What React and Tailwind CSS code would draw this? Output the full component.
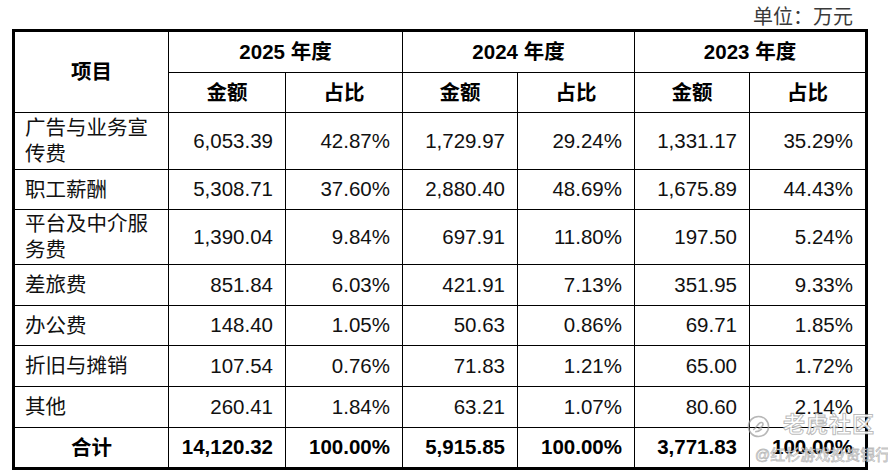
import React from "react";

const font = { fontFamily: '"Liberation Sans", Arial, "Noto Sans CJK SC", sans-serif' };

const rows = [
  [["广告与业务宣", "传费"], "6,053.39", "42.87%", "1,729.97", "29.24%", "1,331.17", "35.29%"],
  [["职工薪酬"], "5,308.71", "37.60%", "2,880.40", "48.69%", "1,675.89", "44.43%"],
  [["平台及中介服", "务费"], "1,390.04", "9.84%", "697.91", "11.80%", "197.50", "5.24%"],
  [["差旅费"], "851.84", "6.03%", "421.91", "7.13%", "351.95", "9.33%"],
  [["办公费"], "148.40", "1.05%", "50.63", "0.86%", "69.71", "1.85%"],
  [["折旧与摊销"], "107.54", "0.76%", "71.83", "1.21%", "65.00", "1.72%"],
  [["其他"], "260.41", "1.84%", "63.21", "1.07%", "80.60", "2.14%"],
];

const total = ["14,120.32", "100.00%", "5,915.85", "100.00%", "3,771.83", "100.00%"];

function Head({ children, className = "" }) {
  return (
    <div className={"bg-white flex items-center justify-center font-bold text-black text-[20.5px] leading-[24px] " + className}>
      {children}
    </div>
  );
}

export default function App() {
  return (
    <div className="relative w-[888px] h-[476px] bg-white overflow-hidden" style={font}>
      <div className="ml-[12px] w-[856px]">
        <div className="h-[29px] flex justify-end pr-[15px] pt-[7px]">
          <span className="text-[20px] leading-[20px] text-[#3a3a3a]">单位：万元</span>
        </div>
        <div className="grid grid-cols-[153px_116px_116px_114px_116px_114px_115px] grid-rows-[40px_39px_56px_39px_54px_40px_39px_40px_40px_39px] gap-px bg-black border-[3px] border-black">
          <Head className="row-span-2">项目</Head>
          <Head className="col-span-2">2025 年度</Head>
          <Head className="col-span-2">2024 年度</Head>
          <Head className="col-span-2">2023 年度</Head>
          <Head>金额</Head>
          <Head>占比</Head>
          <Head>金额</Head>
          <Head>占比</Head>
          <Head>金额</Head>
          <Head>占比</Head>
          {rows.map((r, i) => (
            <React.Fragment key={i}>
              <div className="bg-white flex flex-col justify-center pl-[10px] text-[20.5px] leading-[26px] text-[#111]">
                {r[0].map((l, j) => (
                  <span key={j}>{l}</span>
                ))}
              </div>
              {r.slice(1).map((v, j) => (
                <div key={j} className="bg-white flex items-center justify-end pr-[12px] text-[20.5px] text-[#111]">
                  {v}
                </div>
              ))}
            </React.Fragment>
          ))}
          <Head>合计</Head>
          {total.map((v, j) => (
            <div key={j} className="bg-white flex items-center justify-end pr-[12px] text-[20.5px] font-bold text-black">
              {v}
            </div>
          ))}
        </div>
      </div>

      {/* watermark */}
      <div className="absolute left-[747px] top-[415px] w-[23px] h-[23px] opacity-70">
        <svg viewBox="0 0 24 24" width="23" height="23" fill="none" stroke="#9a9a9a" strokeWidth="1.6">
          <circle cx="12" cy="12" r="10.5" />
          <path d="M6.5 15.5c2-1 3.5-4 6-6.5 1.8-1.8 4.5-1.5 4.2.8-.3 2.2-3 3.8-5 4.5" />
          <path d="M8.5 17.5c2.5 0 5-1 7-3" />
        </svg>
      </div>
      <div className="absolute left-[783px] top-[412px] text-[22px] leading-[26px] font-bold text-white/90 tracking-[1px] [-webkit-text-stroke:1px_rgba(130,130,130,0.55)]">
        老虎社区
      </div>
      <div className="absolute left-[755px] top-[446px] text-[15px] leading-[18px] text-white/90 whitespace-nowrap [-webkit-text-stroke:0.8px_rgba(130,130,130,0.55)]">
        @红杉游戏投资银行
      </div>
    </div>
  );
}
